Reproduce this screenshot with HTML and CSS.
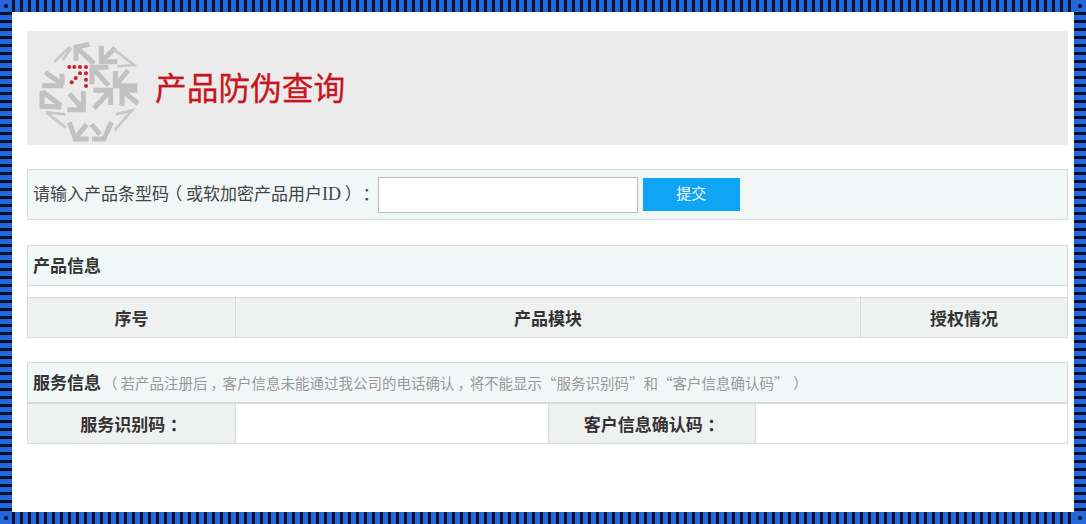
FILE: index.html
```html
<!DOCTYPE html>
<html lang="zh-CN">
<head>
    <meta charset="UTF-8">
    <meta name="viewport" content="width=device-width, initial-scale=1.0">
    <title>产品防伪查询</title>
    <link rel="stylesheet" href="styles.css">
</head>
<body>
    <div class="frame">
        <div class="page">
            <div class="banner">
                <svg class="logo" viewBox="0 0 360 330" width="120" height="110">
                    <g class="logo-arrows">
                        <path d="M138 78V36L178 28M140 38L192 86"/>
                        <path d="M214 32V80H262M216 78L256 38"/>
                        <path d="M46 112L96 148M36 152H100M96 150V116"/>
                        <path d="M235 97H186V148M188 99L236 152"/>
                        <path d="M256 108V152H322M258 150L294 106"/>
                        <path d="M36 168V214L94 216M38 170L94 212"/>
                        <path d="M160 168V224H112M158 222L118 176"/>
                        <path d="M190 166H242V210M240 168L192 220"/>
                        <path d="M322 166H276V212M278 168L324 206"/>
                        <path d="M118 262L136 312H176M136 310L170 268"/>
                        <path d="M184 268L210 298M244 262L222 312H186"/>
                    </g>
                    <g class="logo-thin">
                        <path d="M74 80L118 36M98 76L124 38"/>
                        <path d="M250 42L312 90L262 94"/>
                        <path d="M48 232L108 278M50 232L106 238"/>
                        <path d="M254 286L306 226L258 238"/>
                    </g>
                    <g class="logo-dots">
                        <circle cx="118" cy="96" r="6"/>
                        <circle cx="133" cy="96" r="6"/>
                        <circle cx="150" cy="96" r="6"/>
                        <circle cx="168" cy="96" r="6"/>
                        <circle cx="150" cy="115" r="6"/>
                        <circle cx="168" cy="115" r="6"/>
                        <circle cx="168" cy="134" r="6"/>
                        <circle cx="137" cy="129" r="6"/>
                        <circle cx="125" cy="142" r="6"/>
                        <circle cx="168" cy="153" r="6"/>
                    </g>
                </svg>
                <div class="banner-title">产品防伪查询</div>
            </div>

            <div class="search">
                <label for="code">请输入产品条型码<span class="paren">（</span>或软加密产品用户<span class="latin">ID</span><span class="paren">）</span><span class="punct">：</span></label>
                <input type="text" id="code">
                <button>提交</button>
            </div>

            <div class="panel">
                <div class="panel-title">产品信息</div>
                <div class="spacer"></div>
                <div class="grid grid-product">
                    <div class="cell head">序号</div>
                    <div class="cell head">产品模块</div>
                    <div class="cell head">授权情况</div>
                </div>
            </div>

            <div class="panel">
                <div class="panel-title">服务信息<span class="note"><span class="paren">（</span>若产品注册后<span class="punct">，</span>客户信息未能通过我公司的电话确认<span class="punct">，</span>将不能显示“服务识别码”和“客户信息确认码”<span class="paren paren-end">）</span></span></div>
                <div class="grid grid-service">
                    <div class="cell head">服务识别码<span class="punct">：</span></div>
                    <div class="cell"></div>
                    <div class="cell head">客户信息确认码<span class="punct">：</span></div>
                    <div class="cell"></div>
                </div>
            </div>
        </div>
    </div>
</body>
</html>
```

FILE: styles.css
```css
body {
    margin: 0;
    font-family: "Noto Sans CJK SC", "Noto Sans", sans-serif;
    color: #333;
}
.frame {
    box-sizing: border-box;
    width: 1086px;
    height: 524px;
    padding: 12px;
    background-color: #0a0f2a;
    background-image:
        radial-gradient(circle, #0a0f2a 1.5px, #2268dc 2.5px),
        radial-gradient(circle, #0a0f2a 1.5px, #2268dc 2.5px),
        radial-gradient(circle, #0a0f2a 1.5px, #2268dc 2.5px),
        radial-gradient(circle, #0a0f2a 1.5px, #2268dc 2.5px),
        repeating-linear-gradient(90deg, #0a0f2a 0, #0a0f2a 3px, #2268dc 3px, #2268dc 8px),
        repeating-linear-gradient(90deg, #0a0f2a 0, #0a0f2a 3px, #2268dc 3px, #2268dc 8px),
        repeating-linear-gradient(180deg, #0a0f2a 0, #0a0f2a 3px, #2268dc 3px, #2268dc 8px),
        repeating-linear-gradient(180deg, #0a0f2a 0, #0a0f2a 3px, #2268dc 3px, #2268dc 8px);
    background-size: 12px 12px, 12px 12px, 12px 12px, 12px 12px, 100% 12px, 100% 12px, 12px 100%, 12px 100%;
    background-position: top left, top right, bottom left, bottom right, 12px 0, 12px 100%, 0 12px, 100% 12px;
    background-repeat: no-repeat;
}
.page {
    box-sizing: border-box;
    height: 500px;
    padding: 19px 6px 0 15px;
    background-color: #fff;
}
.banner {
    display: flex;
    height: 114px;
    padding-left: 3px;
    background-color: #ebebeb;
}
.logo {
    margin-top: 4px;
    flex: none;
}
.logo-arrows path {
    fill: none;
    stroke: #c2c2c2;
    stroke-width: 15;
}
.logo-thin path {
    fill: none;
    stroke: #c8c8c8;
    stroke-width: 8;
}
.logo-dots circle {
    fill: #c8202c;
}
.banner-title {
    margin-left: 5px;
    line-height: 110px;
    font-size: 31.7px;
    color: #c8161e;
    -webkit-text-stroke: 0.3px #c8161e;
}
.search {
    display: flex;
    align-items: center;
    box-sizing: border-box;
    height: 51px;
    margin-top: 24px;
    padding-left: 5px;
    border: 1px solid #d5dcdb;
    background-color: #f1f7f7;
    font-size: 17px;
    color: #444;
}
.search label {
    margin-bottom: 4px;
}
.paren {
    padding: 0 0.25em;
    font-feature-settings: "palt";
}
.paren-end {
    padding-left: 0.85em;
}
.punct {
    padding: 0 0.27em;
    font-feature-settings: "palt";
}
.latin {
    font-family: "Liberation Serif", serif;
    font-size: 18px;
}
.search input {
    box-sizing: border-box;
    width: 260px;
    height: 36px;
    margin-left: 2px;
    border: 1px solid #bbb;
    background-color: #fff;
}
.search button {
    width: 97px;
    height: 33px;
    margin-left: 5px;
    padding: 0 0 4px;
    border: none;
    background-color: #0ea5f5;
    color: #fff;
    font-family: inherit;
    font-size: 15px;
}
.panel {
    margin-top: 24px;
}
.search + .panel {
    margin-top: 25px;
}
.panel-title {
    box-sizing: border-box;
    height: 41px;
    padding-left: 5px;
    border: 1px solid #d5dcdb;
    background-color: #f1f7f7;
    font-size: 17px;
    font-weight: bold;
    line-height: 37px;
}
.note {
    margin-left: 5px;
    font-size: 14.5px;
    font-weight: normal;
    color: #999;
}
.spacer {
    box-sizing: border-box;
    height: 11px;
    border-left: 1px solid #d5dcdb;
    border-right: 1px solid #d5dcdb;
}
.grid {
    display: grid;
    box-sizing: border-box;
    height: 41px;
    border: 1px solid #d5dcdb;
}
.grid-product {
    grid-template-columns: 207px 625px 1fr;
}
.grid-service {
    grid-template-columns: 207px 313px 207px 1fr;
}
.cell {
    border-left: 1px solid #d5dcdb;
    text-align: center;
    font-size: 17px;
    font-weight: bold;
    line-height: 39px;
}
.cell:first-child {
    border-left: none;
}
.head {
    background-color: #eff0f0;
}
```
